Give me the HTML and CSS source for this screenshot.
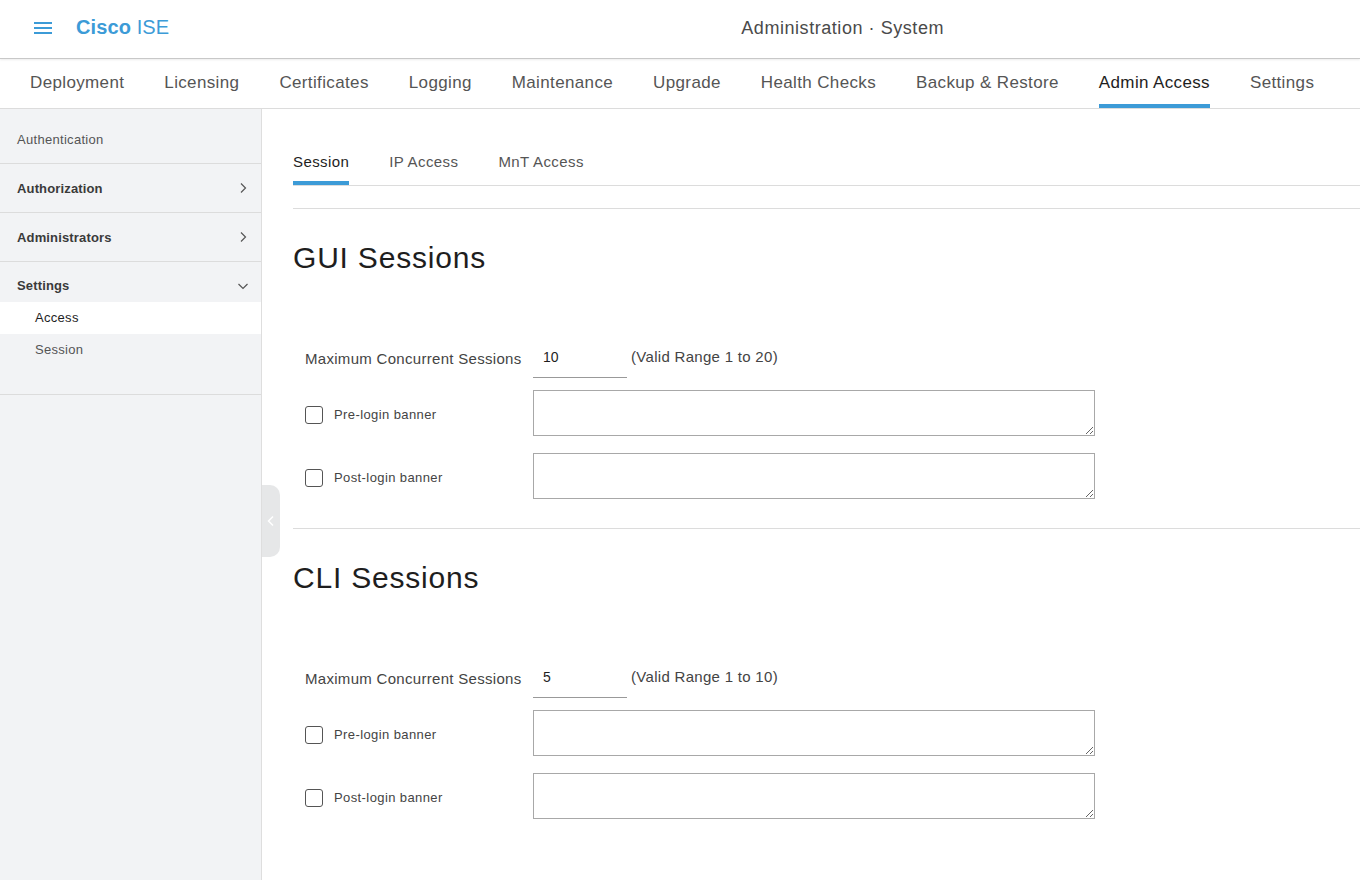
FILE: index.html
```html
<!DOCTYPE html>
<html lang="en">
<head>
  <meta charset="UTF-8">
  <title>Administration · System</title>
  <link rel="stylesheet" href="styles.css">
</head>
<body>
  <header class="topbar">
    <button class="menu-btn" aria-label="Menu">
      <svg width="18" height="14" viewBox="0 0 18 14"><rect y="1" width="18" height="2" fill="#3c9bd7"/><rect y="6" width="18" height="2" fill="#3c9bd7"/><rect y="11" width="18" height="2" fill="#3c9bd7"/></svg>
    </button>
    <div class="brand"><b>Cisco</b> ISE</div>
    <div class="page-title">Administration · System</div>
  </header>

  <nav class="main-tabs">
    <a>Deployment</a>
    <a>Licensing</a>
    <a>Certificates</a>
    <a>Logging</a>
    <a>Maintenance</a>
    <a>Upgrade</a>
    <a>Health Checks</a>
    <a>Backup &amp; Restore</a>
    <a class="active">Admin Access</a>
    <a>Settings</a>
  </nav>

  <div class="layout">
    <aside class="sidebar">
      <div class="side-item">Authentication</div>
      <div class="side-item bold">Authorization
        <svg class="chev" width="8" height="12" viewBox="0 0 8 12"><path d="M2 1.5 L6.5 6 L2 10.5" fill="none" stroke="#555" stroke-width="1.2"/></svg>
      </div>
      <div class="side-item bold">Administrators
        <svg class="chev" width="8" height="12" viewBox="0 0 8 12"><path d="M2 1.5 L6.5 6 L2 10.5" fill="none" stroke="#555" stroke-width="1.2"/></svg>
      </div>
      <div class="side-group">
        <div class="side-head bold">Settings
          <svg class="chev" width="12" height="8" viewBox="0 0 12 8"><path d="M1.5 2 L6 6.5 L10.5 2" fill="none" stroke="#555" stroke-width="1.2"/></svg>
        </div>
        <div class="side-sub current">Access</div>
        <div class="side-sub">Session</div>
      </div>
    </aside>

    <main class="content">
      <div class="collapse-handle">
        <svg width="8" height="12" viewBox="0 0 8 12"><path d="M6 1.5 L1.5 6 L6 10.5" fill="none" stroke="#fff" stroke-width="1.5"/></svg>
      </div>

      <div class="sub-tabs">
        <a class="active">Session</a>
        <a>IP Access</a>
        <a>MnT Access</a>
      </div>

      <section class="session-block">
        <h2>GUI Sessions</h2>
        <div class="form-row max-row">
          <label class="field-label">Maximum Concurrent Sessions</label>
          <input class="num-input" type="text" value="10">
          <span class="range">(Valid Range 1 to 20)</span>
        </div>
        <div class="form-row banner-row">
          <label class="check-label"><span class="checkbox"></span>Pre-login banner</label>
          <textarea></textarea>
        </div>
        <div class="form-row banner-row">
          <label class="check-label"><span class="checkbox"></span>Post-login banner</label>
          <textarea></textarea>
        </div>
      </section>

      <section class="session-block">
        <h2>CLI Sessions</h2>
        <div class="form-row max-row">
          <label class="field-label">Maximum Concurrent Sessions</label>
          <input class="num-input" type="text" value="5">
          <span class="range">(Valid Range 1 to 10)</span>
        </div>
        <div class="form-row banner-row">
          <label class="check-label"><span class="checkbox"></span>Pre-login banner</label>
          <textarea></textarea>
        </div>
        <div class="form-row banner-row">
          <label class="check-label"><span class="checkbox"></span>Post-login banner</label>
          <textarea></textarea>
        </div>
      </section>
    </main>
  </div>
</body>
</html>
```

FILE: styles.css
```css
body {
  margin: 0;
  font-family: 'Liberation Sans', Arial, sans-serif;
  letter-spacing: 0.3px;
  color: #333;
  background: #fff;
  height: 880px;
  overflow: hidden;
}

.topbar {
  height: 58px;
  border-bottom: 1px solid #c8c8c8;
  display: flex;
  align-items: center;
  box-shadow: 0 1px 2px rgba(0, 0, 0, 0.08);
}

.menu-btn {
  border: 0;
  background: none;
  padding: 0;
  margin-left: 34px;
  margin-bottom: 2px;
  width: 18px;
  height: 14px;
  display: flex;
}

.brand {
  margin-left: 24px;
  margin-bottom: 3px;
  font-size: 20px;
  color: #3c9bd7;
  letter-spacing: 0.1px;
}

.brand b {
  font-weight: bold;
}

.page-title {
  margin-left: auto;
  margin-right: 416px;
  margin-bottom: 2px;
  font-size: 18px;
  color: #4a4a4a;
  letter-spacing: 0.55px;
}

.main-tabs {
  display: flex;
  height: 49px;
  padding-left: 10px;
  border-bottom: 1px solid #dcdcdc;
}

.main-tabs a {
  padding: 0 20px;
  font-size: 17px;
  line-height: 47px;
  letter-spacing: 0.36px;
  color: #555;
  position: relative;
}

.main-tabs a.active {
  color: #1e1e1e;
}

.main-tabs a.active::after {
  content: "";
  position: absolute;
  left: 20px;
  right: 20px;
  bottom: 0;
  height: 4px;
  background: #3c9bd7;
}

.layout {
  display: flex;
  height: 771px;
}

.sidebar {
  width: 261px;
  flex: none;
  background: #f2f3f5;
  border-right: 1px solid #dedede;
  padding-top: 6px;
}

.side-item {
  height: 48px;
  border-bottom: 1px solid #dcdcdc;
  display: flex;
  align-items: center;
  justify-content: space-between;
  padding: 0 14px 0 17px;
  font-size: 13px;
  color: #555;
}

.bold {
  font-weight: bold;
  color: #3a3a3a;
  letter-spacing: 0.15px;
}

.side-group {
  border-bottom: 1px solid #dcdcdc;
  padding-bottom: 28px;
}

.side-head {
  height: 40px;
  box-sizing: border-box;
  padding: 16px 12px 0 17px;
  display: flex;
  align-items: flex-start;
  justify-content: space-between;
  font-size: 13px;
  line-height: 16px;
}

.side-head .chev {
  margin-top: 4px;
}

.side-sub {
  height: 32px;
  line-height: 32px;
  padding-left: 35px;
  font-size: 13px;
  color: #555;
}

.side-sub.current {
  background: #fff;
  color: #1e1e1e;
}

.content {
  flex: 1;
  padding-left: 31px;
  position: relative;
}

.collapse-handle {
  position: absolute;
  left: 0;
  top: 376px;
  width: 18px;
  height: 72px;
  background: #e6e7e8;
  border-radius: 0 10px 10px 0;
  display: flex;
  align-items: center;
  justify-content: center;
}

.sub-tabs {
  margin-top: 31px;
  display: flex;
  gap: 40px;
  border-bottom: 1px solid #dcdcdc;
}

.sub-tabs a {
  font-size: 15px;
  line-height: 41px;
  padding-top: 1px;
  height: 40px;
  color: #555;
  border-bottom: 4px solid transparent;
  letter-spacing: 0.4px;
}

.sub-tabs a.active {
  color: #1e1e1e;
  border-bottom-color: #3c9bd7;
}

.session-block {
  margin-top: 22px;
  border-top: 1px solid #dcdcdc;
  padding-bottom: 29px;
}

.session-block + .session-block {
  margin-top: 0;
}

.session-block h2 {
  margin: 31px 0 0;
  height: 35px;
  font-size: 30px;
  line-height: 36px;
  font-weight: normal;
  color: #1e1e1e;
  letter-spacing: 0.8px;
}

.form-row {
  display: flex;
  align-items: center;
  padding-left: 12px;
}

.max-row {
  margin-top: 65px;
  height: 38px;
}

.field-label {
  width: 228px;
  font-size: 15px;
  color: #444;
  margin-top: -2px;
}

.num-input {
  width: 94px;
  height: 38px;
  box-sizing: border-box;
  border: 0;
  border-bottom: 1px solid #999;
  padding: 0 0 4px 10px;
  font-family: inherit;
  font-size: 14px;
  color: #1e1e1e;
  outline: none;
}

.range {
  margin-left: 4px;
  font-size: 15px;
  color: #444;
  margin-top: -5px;
}

.banner-row {
  margin-top: 12px;
}

.banner-row + .banner-row {
  margin-top: 17px;
}

.check-label {
  width: 228px;
  display: flex;
  align-items: center;
  font-size: 13px;
  letter-spacing: 0.4px;
  color: #444;
  margin-top: 3px;
}

.checkbox {
  width: 18px;
  height: 18px;
  box-sizing: border-box;
  border: 1.5px solid #555;
  border-radius: 3px;
  margin-right: 11px;
  background: #fff;
}

textarea {
  width: 562px;
  height: 46px;
  box-sizing: border-box;
  border: 1px solid #a8a8a8;
  margin: 0;
  display: block;
}
```
